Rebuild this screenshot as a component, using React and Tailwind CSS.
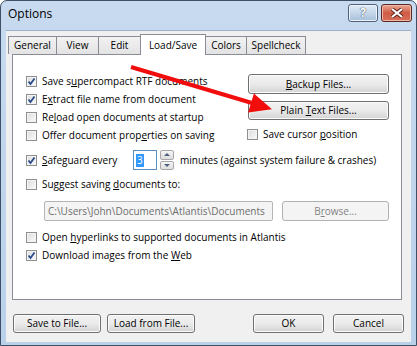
import React from "react";

const Check = ({ checked }) => (
  <span className="relative w-[11px] h-[11px] shrink-0 border border-[#8e8f8f] bg-gradient-to-br from-[#dcdcdc] to-[#fbfbfb] shadow-[inset_0_0_0_1px_#f4f4f4]">
    {checked && (
      <svg viewBox="0 0 11 11" className="absolute -left-px -top-px w-[11px] h-[11px]">
        <path d="M2.5 5.5 L4.5 8 L8.5 2.5" fill="none" stroke="#2a4a8a" strokeWidth="1.8" />
      </svg>
    )}
  </span>
);

const Row = ({ checked, children, className = "" }) => (
  <div className={`flex items-center h-[18px] ${className}`}>
    <Check checked={checked} />
    <span className="ml-[5px] whitespace-nowrap">{children}</span>
  </div>
);

const Btn = ({ children, className = "" }) => (
  <div
    className={`flex items-center justify-center rounded-[3px] border border-[#707070] bg-gradient-to-b from-[#f2f2f2] via-[#ebebeb] to-[#d3d3d3] shadow-[inset_0_0_0_1px_#fcfcfc] whitespace-nowrap ${className}`}
  >
    {children}
  </div>
);

const Tab = ({ children, w, selected }) =>
  selected ? (
    <div
      className={`relative z-10 -mb-px -ml-px h-[21px] flex items-start justify-center pt-[3px] bg-white border border-b-0 border-[#898c95] ${w}`}
    >
      {children}
    </div>
  ) : (
    <div
      className={`-ml-px h-[18px] flex items-center justify-center bg-gradient-to-b from-[#f2f2f2] to-[#e3e3e3] border border-b-0 border-[#898c95] ${w}`}
    >
      {children}
    </div>
  );

const U = ({ children }) => <span className="underline underline-offset-1">{children}</span>;

export default function App() {
  return (
    <div className="relative w-[417px] h-[346px] rounded-t-[7px] border border-[#3e5066] bg-gradient-to-b from-[#c7daef] to-[#b9d1ea] font-['Open_Sans'] text-[10px] text-black overflow-hidden">
      {/* title bar */}
      <div className="flex h-[29px]">
        <div className="pl-[7px] pt-[4px] text-[12px] leading-[18px]">Options</div>
        <div className="ml-auto flex pt-[3px] pr-[4px] gap-[3px]">
          <div className="w-[30px] h-[18px] rounded-[3px] border border-[#4f6178] bg-gradient-to-b from-[#dfeaf6] via-[#c4d6ea] to-[#a6bfdb] flex items-center justify-center shadow-[inset_0_0_0_1px_#eef4fb]">
            <span className="text-[12px] font-bold text-white leading-none [text-shadow:0_0_1px_#33465e,0_0_1px_#33465e]">?</span>
          </div>
          <div className="w-[31px] h-[18px] rounded-[3px] border border-[#5a2a22] bg-gradient-to-b from-[#e9a896] via-[#cf5a44] to-[#d9705a] flex items-center justify-center shadow-[inset_0_0_0_1px_#f0b8a8]">
            <svg viewBox="0 0 14 10" className="w-[14px] h-[10px]">
              <path d="M2 1 L12 9 M12 1 L2 9" stroke="#5b231b" strokeWidth="4" />
              <path d="M2 1 L12 9 M12 1 L2 9" stroke="#ffffff" strokeWidth="2.2" />
            </svg>
          </div>
        </div>
      </div>

      {/* client area */}
      <div className="ml-[5px] w-[405px] h-[312px] bg-[#f0f0f0] border-t border-[#9bb0c8] flex flex-col">
        <div className="flex items-end h-[23px] pl-[3px]">
          <Tab w="w-[49px]">General</Tab>
          <Tab w="w-[43px]">View</Tab>
          <Tab w="w-[43px]">Edit</Tab>
          <Tab w="w-[66px]" selected>
            Load/Save
          </Tab>
          <Tab w="w-[42px]">Colors</Tab>
          <Tab w="w-[60px]">Spellcheck</Tab>
        </div>

        <div className="ml-[6px] w-[390px] h-[246px] bg-white border border-[#898c95] flex flex-col">
          <div className="flex">
            <div className="w-[234px] pl-[13px] pt-[17px]">
              <Row checked>
                Save s<U>u</U>percompact RTF documents
              </Row>
              <Row checked>
                E<U>x</U>tract file name from document
              </Row>
              <Row>
                Re<U>l</U>oad open documents at startup
              </Row>
              <Row>
                Offer document prop<U>e</U>rties on saving
              </Row>
            </div>
            <div className="pt-[19px] flex flex-col">
              <Btn className="ml-px w-[141px] h-[20px]">
                <span>
                  <U>B</U>ackup Files...
                </span>
              </Btn>
              <Btn className="ml-px mt-[7px] w-[141px] h-[19px]">
                <span>
                  Plain <U>T</U>ext Files...
                </span>
              </Btn>
              <Row className="mt-[5px]">
                Save cursor <U>p</U>osition
              </Row>
            </div>
          </div>

          <div className="flex items-center h-[22px] mt-[5px] pl-[13px]">
            <Check checked />
            <span className="ml-[5px] w-[91px]">
              <U>S</U>afeguard every
            </span>
            <div className="w-[24px] h-[20px] border border-[#5b8fbf] bg-white flex items-center pl-[2px]">
              <span className="bg-[#3399ff] text-white leading-[13px] px-px">3</span>
            </div>
            <div className="ml-[3px] w-[14px] h-[20px] flex flex-col gap-px">
              <div className="flex-1 rounded-[2px] border border-[#a7a7a7] bg-gradient-to-b from-[#f5f5f5] to-[#dedede] flex items-center justify-center">
                <span className="w-0 h-0 border-x-[3px] border-x-transparent border-b-[3px] border-b-[#4c607f]" />
              </div>
              <div className="flex-1 rounded-[2px] border border-[#a7a7a7] bg-gradient-to-b from-[#f5f5f5] to-[#dedede] flex items-center justify-center">
                <span className="w-0 h-0 border-x-[3px] border-x-transparent border-t-[3px] border-t-[#4c607f]" />
              </div>
            </div>
            <span className="ml-[6px] whitespace-nowrap">minutes (against system failure &amp; crashes)</span>
          </div>

          <Row className="mt-[4px] pl-[13px]">
            Suggest saving <U>d</U>ocuments to:
          </Row>

          <div className="flex mt-[8px] pl-[31px] h-[20px]">
            <div className="w-[229px] h-[20px] border border-[#b5b5b5] rounded-[2px] bg-[#f4f4f4] text-[#6d6d6d] flex items-center pl-[3px] whitespace-nowrap overflow-hidden">
              C:\Users\John\Documents\Atlantis\Documents
            </div>
            <div className="ml-[9px] w-[107px] h-[20px] rounded-[3px] border border-[#adb2b5] bg-[#f4f4f4] text-[#838383] flex items-center justify-center">
              <span>
                B<U>r</U>owse...
              </span>
            </div>
          </div>

          <Row className="mt-[7px] pl-[13px]">
            Open <U>h</U>yperlinks to supported documents in Atlantis
          </Row>
          <Row checked className="pl-[13px]">
            Download images from the <U>W</U>eb
          </Row>
        </div>

        <div className="flex mt-[14px] pl-[7px]">
          <Btn className="w-[88px] h-[19px]">Save to File...</Btn>
          <Btn className="ml-[6px] w-[88px] h-[19px]">Load from File...</Btn>
          <Btn className="ml-[58px] w-[71px] h-[19px] border-[#3c7fb1] shadow-[inset_0_0_0_1px_#8ed7f7]">OK</Btn>
          <Btn className="ml-[9px] w-[71px] h-[19px]">Cancel</Btn>
        </div>
      </div>

      {/* annotation arrow */}
      <svg className="absolute left-[-1px] top-[-1px] w-[417px] h-[346px] pointer-events-none" viewBox="0 0 417 346">
        <line x1="131" y1="67" x2="252" y2="103" stroke="#f20d0d" strokeWidth="4" />
        <polygon points="272,109.3 248.1,112.6 253.9,93.4" fill="#f20d0d" />
      </svg>
    </div>
  );
}
